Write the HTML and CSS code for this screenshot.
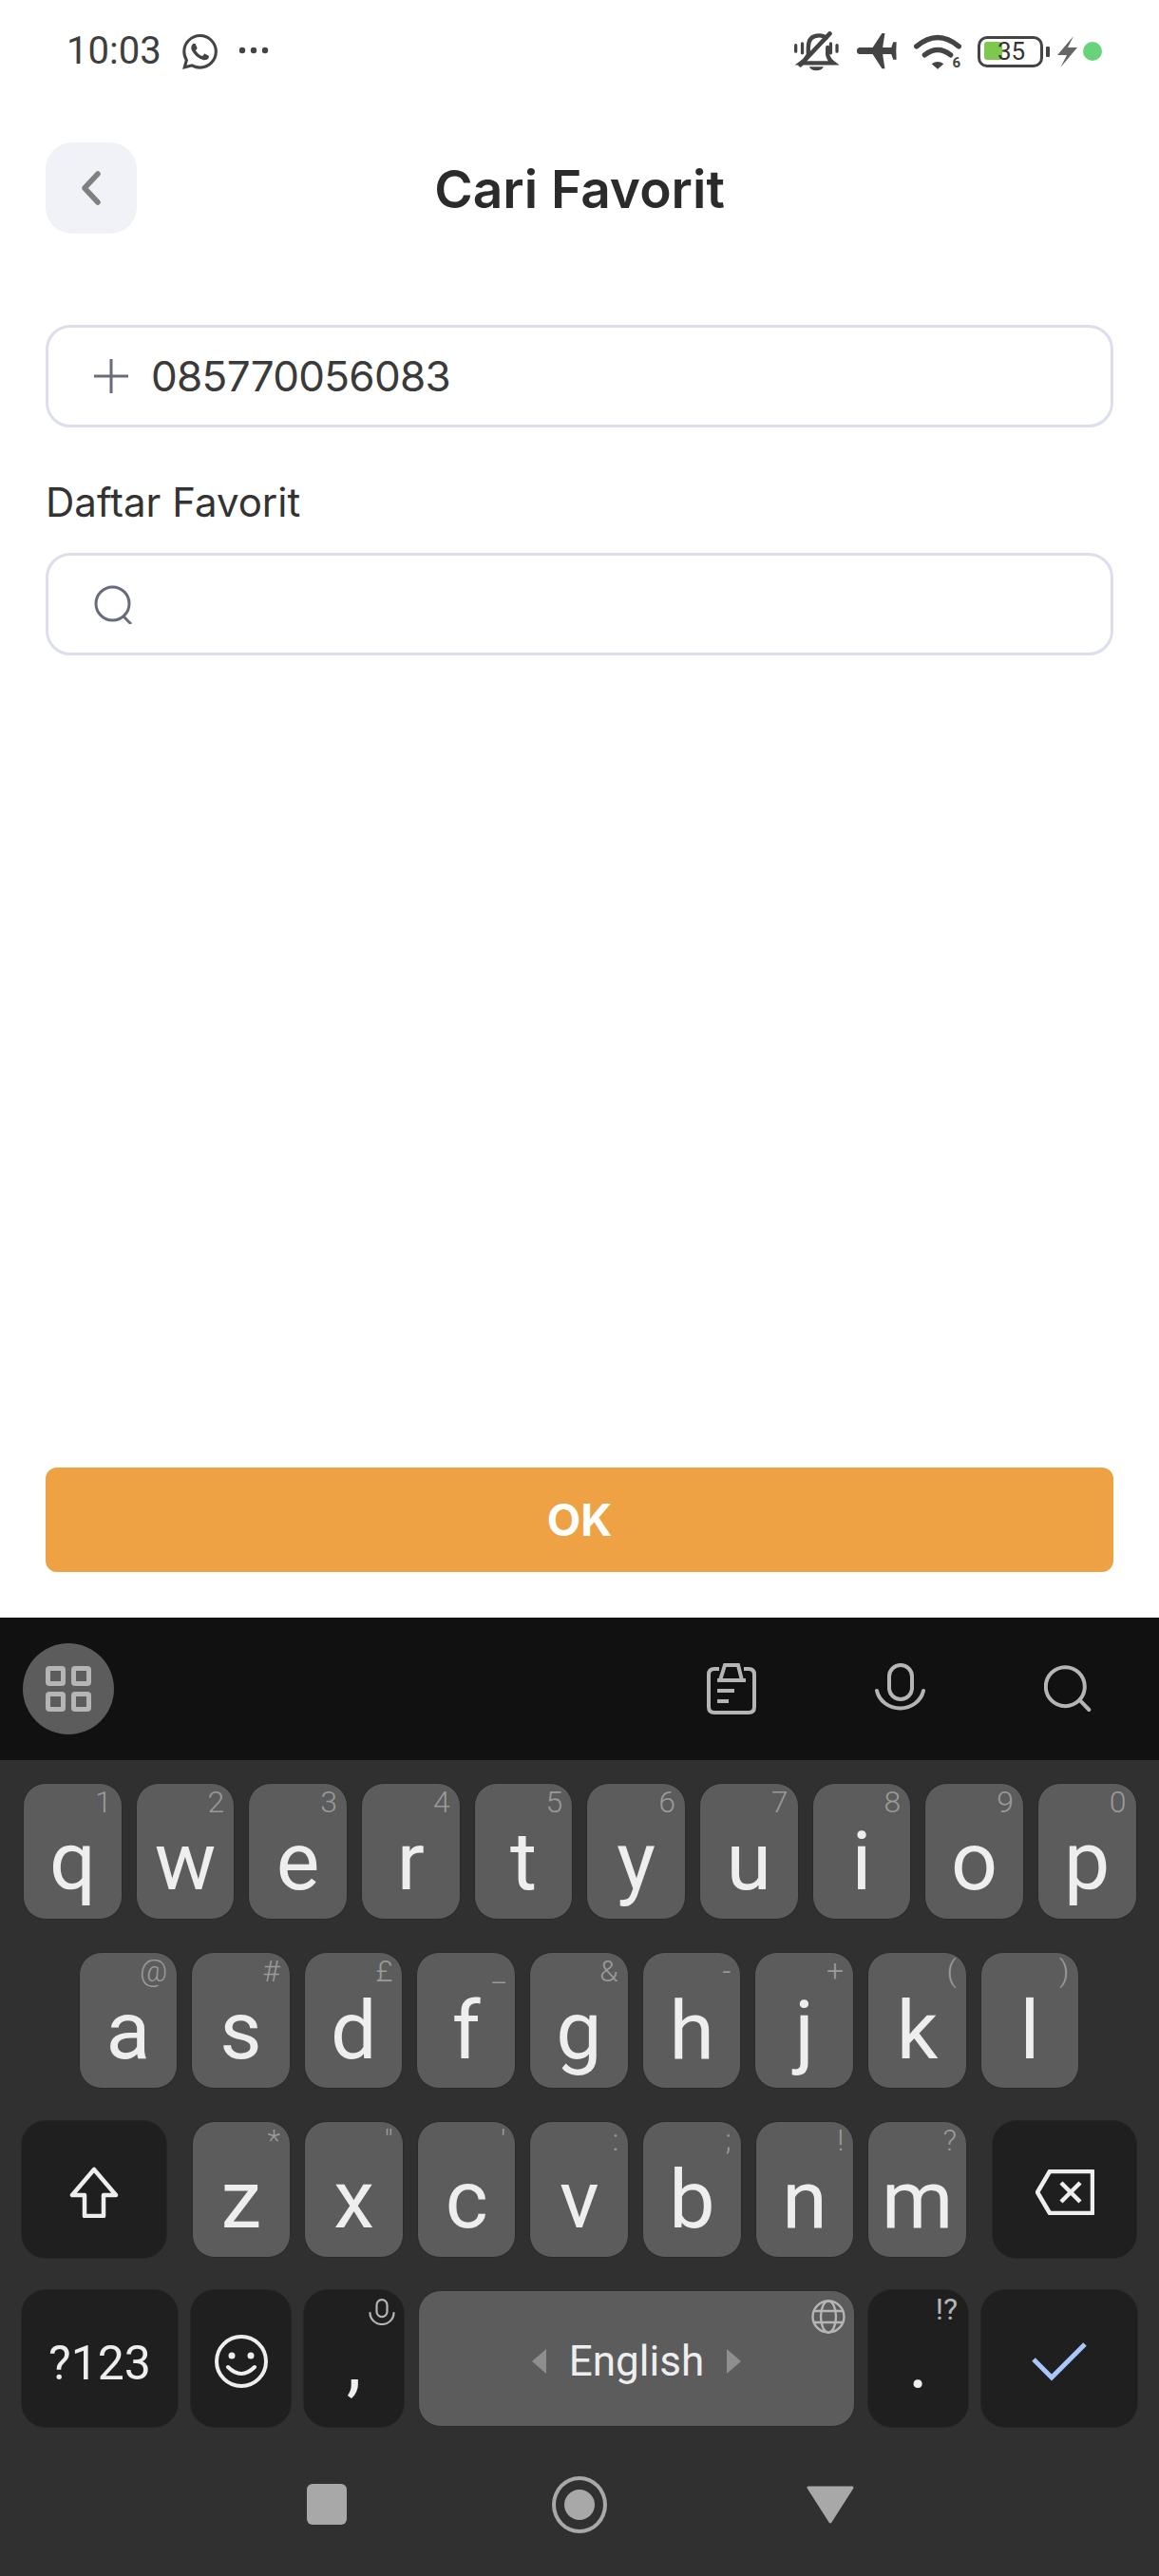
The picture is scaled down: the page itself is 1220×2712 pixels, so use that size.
FILE: index.html
```html
<!DOCTYPE html>
<html lang="id">
<head>
<meta charset="utf-8">
<title>Cari Favorit</title>
<link rel="stylesheet" href="styles.css">
</head>
<body>
<div class="phone">
  <main class="app">
    <div class="statusbar">
      <div class="status-left">
        <span class="time">10:03</span>
        <svg class="ic-wa" viewBox="0 0 24 24"><path fill="#444" d="M17.472 14.382c-.297-.149-1.758-.867-2.03-.967-.273-.099-.471-.148-.67.15-.197.297-.767.966-.94 1.164-.173.199-.347.223-.644.075-.297-.15-1.255-.463-2.39-1.475-.883-.788-1.48-1.761-1.653-2.059-.173-.297-.018-.458.13-.606.134-.133.298-.347.446-.52.149-.174.198-.298.298-.497.099-.198.05-.371-.025-.52-.075-.149-.669-1.612-.916-2.207-.242-.579-.487-.5-.669-.51-.173-.008-.371-.01-.57-.01-.198 0-.52.074-.792.372-.272.297-1.04 1.016-1.04 2.479 0 1.462 1.065 2.875 1.213 3.074.149.198 2.096 3.2 5.077 4.487.709.306 1.262.489 1.694.625.712.227 1.36.195 1.871.118.571-.085 1.758-.719 2.006-1.413.248-.694.248-1.289.173-1.413-.074-.124-.272-.198-.57-.347m-5.421 7.403h-.004a9.87 9.87 0 01-5.031-1.378l-.361-.214-3.741.982.998-3.648-.235-.374a9.86 9.86 0 01-1.51-5.26c.001-5.45 4.436-9.884 9.888-9.884 2.64 0 5.122 1.03 6.988 2.898a9.825 9.825 0 012.893 6.994c-.003 5.45-4.437 9.884-9.885 9.884m8.413-18.297A11.815 11.815 0 0012.05 0C5.495 0 .16 5.335.157 11.892c0 2.096.547 4.142 1.588 5.945L.057 24l6.305-1.654a11.882 11.882 0 005.683 1.448h.005c6.554 0 11.89-5.335 11.893-11.893a11.821 11.821 0 00-3.48-8.413z"/></svg>
        <svg class="ic-dots" viewBox="0 0 32 8"><circle cx="4" cy="4" r="3.2" fill="#444"/><circle cx="16" cy="4" r="3.2" fill="#444"/><circle cx="28" cy="4" r="3.2" fill="#444"/></svg>
      </div>
      <div class="status-right">
        <svg class="ic-bell" viewBox="170 100 143 125"><g fill="none" stroke="#444" stroke-width="13" stroke-linecap="round"><path d="M175 143v20M307 143v20M196 138v30M287 138v30" stroke-width="10"/><path d="M215 170v-20q0-38 35-38q14 0 22 8M277 150v22q2 16 18 28H192q14-10 20-22"/><path d="M190 206L284 106" stroke-width="14"/></g><path fill="#444" d="M218 212h46q-6 12-23 12t-23-12z"/></svg>
        <svg class="ic-plane" viewBox="367 103 133 115"><path fill="#444" d="M380 147h42l29-44h9l-7 44h27l6-17h10l-1 28 1 27h-10l-6-17h-27l7 45h-9l-29-45h-42a11 11 0 0 1 0-21z"/></svg>
        <div class="wifi">
          <svg class="ic-wifi" viewBox="550 105 150 110"><g fill="none" stroke="#444" stroke-width="16" stroke-linecap="round"><path d="M558 143q67-56 134 0"/><path d="M584 170q41-32 82 0"/></g><path fill="#444" d="M606 198q19-13 38 0l-19 17z"/></svg>
          <span class="wifi-six">6</span>
        </div>
        <div class="battery">
          <div class="battery-body"><span class="battery-fill"></span><span class="battery-text">35</span></div>
          <span class="battery-nub"></span>
        </div>
        <div class="charge">
          <svg class="ic-bolt" viewBox="0 0 21 33"><path fill="#666" d="M17 0L0 20H10L3.300 33L21 12H11Z"/></svg>
          <span class="dot"></span>
        </div>
      </div>
    </div>

    <header class="header">
      <button class="back" type="button" aria-label="Kembali">
        <svg class="ic-chev" viewBox="0 0 22 36"><path d="M18 3L4 18l14 15" fill="none" stroke="#808080" stroke-width="5.5" stroke-linecap="round" stroke-linejoin="round"/></svg>
      </button>
      <h1 class="title">Cari Favorit</h1>
      <span></span>
    </header>

    <section class="form">
      <div class="field">
        <svg class="ic-field" viewBox="0 0 36 36"><path d="M18 0v36M0 18h36" stroke="#686b7a" stroke-width="3" fill="none"/></svg>
        <span class="field-text">085770056083</span>
      </div>
      <div class="label">Daftar Favorit</div>
      <div class="field">
        <svg class="ic-field-search" viewBox="0 0 40 41"><circle cx="19.5" cy="19.5" r="17.5" fill="none" stroke="#686b7a" stroke-width="3"/><path d="M31 33l8 8" stroke="#686b7a" stroke-width="3" fill="none"/></svg>
      </div>
    </section>

    <button class="ok" type="button">OK</button>
  </main>

  <section class="keyboard">
    <div class="toolbar">
      <div class="tool-grid">
        <svg class="ic-grid" viewBox="0 0 48 48"><g fill="none" stroke="#b5b5b5" stroke-width="5"><rect x="2.500" y="2.500" width="16" height="16" rx="1.500"/><rect x="29.500" y="2.500" width="16" height="16" rx="1.500"/><rect x="2.500" y="29.500" width="16" height="16" rx="1.500"/><rect x="29.500" y="29.500" width="16" height="16" rx="1.500"/></g></svg>
      </div>
      <div class="tool-right">
        <svg class="ic-clip" viewBox="0 0 52 54"><g fill="none" stroke="#b5b5b5" stroke-width="4"><path d="M13 6H8Q2 6 2 12V46Q2 52 8 52H44Q50 52 50 46V12Q50 6 44 6H39"/><path d="M14 18L19 2H33L37 18M11 18H41M11 29H29M11 40H23"/></g></svg>
        <svg class="ic-mic" viewBox="0 0 53 54"><g fill="none" stroke="#b5b5b5" stroke-width="4" stroke-linecap="round"><rect x="15" y="2" width="24" height="36" rx="12"/><path d="M2 29A25 23 0 0 0 51 29"/></g></svg>
        <svg class="ic-search" viewBox="0 0 50 50"><g fill="none" stroke="#b5b5b5" stroke-width="4" stroke-linecap="round"><circle cx="22.300" cy="22.700" r="20.500"/><path d="M38.300 37.700L47.300 47"/></g></svg>
      </div>
    </div>

    <div class="keys">
      <div class="row row-one">
        <div class="key"><span class="hint">1</span>q</div>
        <div class="key"><span class="hint">2</span>w</div>
        <div class="key"><span class="hint">3</span>e</div>
        <div class="key"><span class="hint">4</span>r</div>
        <div class="key"><span class="hint">5</span>t</div>
        <div class="key"><span class="hint">6</span>y</div>
        <div class="key"><span class="hint">7</span>u</div>
        <div class="key"><span class="hint">8</span>i</div>
        <div class="key"><span class="hint">9</span>o</div>
        <div class="key"><span class="hint">0</span>p</div>
      </div>
      <div class="row row-two">
        <div class="key"><span class="hint">@</span>a</div>
        <div class="key"><span class="hint">#</span>s</div>
        <div class="key"><span class="hint">£</span>d</div>
        <div class="key"><span class="hint">_</span>f</div>
        <div class="key"><span class="hint">&amp;</span>g</div>
        <div class="key"><span class="hint">-</span>h</div>
        <div class="key"><span class="hint">+</span>j</div>
        <div class="key"><span class="hint">(</span>k</div>
        <div class="key"><span class="hint">)</span>l</div>
      </div>
      <div class="row row-three">
        <div class="fn fn-shift">
          <svg class="ic-shift" viewBox="0 0 52 54"><path d="M26 3L3 30H16V52H36V30H49Z" fill="none" stroke="#eee" stroke-width="4.500" stroke-linejoin="round"/></svg>
        </div>
        <div class="key"><span class="hint">*</span>z</div>
        <div class="key"><span class="hint">"</span>x</div>
        <div class="key"><span class="hint">'</span>c</div>
        <div class="key"><span class="hint">:</span>v</div>
        <div class="key"><span class="hint">;</span>b</div>
        <div class="key"><span class="hint">!</span>n</div>
        <div class="key"><span class="hint">?</span>m</div>
        <div class="fn fn-back">
          <svg class="ic-back" viewBox="0 0 62 48"><g fill="none" stroke="#eee" stroke-width="4.500" stroke-linejoin="round"><path d="M15 2H60V46H15L2 24Z"/><path d="M27 14L47 34M47 14L27 34"/></g></svg>
        </div>
      </div>
      <div class="row row-four">
        <div class="fn fn-sym">?123</div>
        <div class="fn fn-emoji">
          <svg class="ic-emoji" viewBox="0 0 56 56"><g fill="none" stroke="#eee" stroke-width="4"><circle cx="28" cy="28" r="26"/><path d="M14 34Q28 48 42 34" stroke-linecap="round"/></g><circle cx="18" cy="22" r="3.500" fill="#eee"/><circle cx="38" cy="22" r="3.500" fill="#eee"/></svg>
        </div>
        <div class="fn fn-punct">
          <svg class="ic-minimic" viewBox="0 0 28 28"><g fill="none" stroke="#b5b5b5" stroke-width="2.200" stroke-linecap="round"><rect x="8.500" y="1.200" width="11" height="18" rx="5.500"/><path d="M1.500 15A12.500 12 0 0 0 26.500 15"/></g></svg>
          ,
        </div>
        <div class="space">
          <svg class="ic-globe" viewBox="0 0 36 36"><g fill="none" stroke="#b5b5b5" stroke-width="2.400"><circle cx="18" cy="18" r="16.500"/><ellipse cx="18" cy="18" rx="8" ry="16.500"/><path d="M3 12H33M3 24H33"/></g></svg>
          <svg class="ic-arrow" viewBox="0 0 15 26"><path d="M15 0V26L0 13Z" fill="#8e8e8e"/></svg>
          <span>English</span>
          <svg class="ic-arrow" viewBox="0 0 15 26"><path d="M0 0V26L15 13Z" fill="#8e8e8e"/></svg>
        </div>
        <div class="fn fn-punct"><span class="hint hint-fn">!?</span>.</div>
        <div class="fn fn-enter">
          <svg class="ic-check" viewBox="0 0 58 42"><path d="M2 19L21 38L56 3" fill="none" stroke="#a8c7fa" stroke-width="5"/></svg>
        </div>
      </div>
    </div>

    <nav class="nav">
      <span class="nav-square"></span>
      <span class="nav-circle"><span class="nav-inner"></span></span>
      <svg class="ic-tri" viewBox="0 0 50 40"><path d="M2 2H48L25 38Z" fill="#a8a8a8" stroke="#a8a8a8" stroke-width="3" stroke-linejoin="round"/></svg>
    </nav>
  </section>
</div>
</body>
</html>
```
FILE: styles.css
```css
* { box-sizing: border-box; }
html, body { margin: 0; padding: 0; }
body { background: #fff; font-family: Roboto, "Liberation Sans", sans-serif; }

.phone { width: 1220px; height: 2712px; display: flex; flex-direction: column; overflow: hidden; }

.app { height: 1703px; padding: 0 48px 48px; display: flex; flex-direction: column; background: #fff; }

.statusbar { height: 106px; margin: 0 -48px; padding: 2px 60px 0 70px; display: flex; justify-content: space-between; align-items: center; }
.status-left, .status-right, .charge, .battery { display: flex; align-items: center; }
.status-left { gap: 22px; }
.time { font-size: 40px; color: #3e3e3e; line-height: 1; }
.ic-wa { width: 37px; height: 37px; display: block; }
.ic-dots { width: 32px; height: 8px; display: block; margin-bottom: 2px; }
.status-right { gap: 17px; }
.ic-bell { width: 47px; height: 42px; display: block; }
.ic-plane { width: 45px; height: 39px; display: block; }
.wifi { position: relative; width: 50px; height: 37px; }
.ic-wifi { width: 50px; height: 37px; display: block; }
.wifi-six { position: absolute; right: 1px; bottom: 0; font-size: 15px; font-weight: 700; line-height: 13px; color: #444; }
.battery { gap: 3px; }
.battery-body { position: relative; width: 69px; height: 33px; border: 3.500px solid #444; border-radius: 10px; display: flex; align-items: center; justify-content: center; }
.battery-fill { position: absolute; left: 4px; top: 3.500px; width: 19px; height: 19px; background: #7ec850; border-radius: 3px; }
.battery-text { position: relative; font-size: 26px; color: #333; margin-left: 2px; line-height: 1; }
.battery-nub { width: 4px; height: 11px; background: #444; border-radius: 1px; }
.charge { gap: 6px; margin-left: -9px; }
.ic-bolt { width: 21px; height: 33px; display: block; }
.dot { width: 20px; height: 20px; border-radius: 50%; background: #68d37a; }

.header { margin-top: 44px; height: 96px; display: grid; grid-template-columns: 96px 1fr 96px; align-items: center; }
.back { width: 96px; height: 96px; border: 0; padding: 0; background: #f1f2f8; border-radius: 28px; display: flex; align-items: center; justify-content: center; }
.ic-chev { width: 22px; height: 36px; display: block; }
.title { margin: 0; padding-top: 2px; text-align: center; font-family: Inter, sans-serif; font-size: 55px; font-weight: 600; color: #2b2b2b; line-height: 60px; }

.form { margin-top: 96px; display: flex; flex-direction: column; }
.field { height: 108px; border: 3px solid #dcdfeb; border-radius: 26px; padding-left: 48px; display: flex; align-items: center; gap: 24px; }
.ic-field { width: 36px; height: 36px; display: block; }
.ic-field-search { width: 40px; height: 41px; display: block; }
.field-text { font-family: Inter, sans-serif; font-size: 44px; letter-spacing: -0.7px; color: #3a3a3a; line-height: 1; }
.label { margin: 51px 0 25px; font-family: Inter, sans-serif; font-size: 42px; color: #333; line-height: 56px; }

.ok { margin-top: auto; height: 110px; border: 0; background: #eea243; color: #fff; border-radius: 12px; font-family: Inter, sans-serif; font-size: 46px; font-weight: 700; }

.keyboard { flex: 1; display: flex; flex-direction: column; background: #303030; }
.toolbar { height: 150px; background: #111; padding: 0 71px 0 24px; display: flex; align-items: center; justify-content: space-between; }
.tool-grid { width: 96px; height: 96px; border-radius: 50%; background: #5c5c5c; display: flex; align-items: center; justify-content: center; }
.ic-grid { width: 48px; height: 48px; display: block; }
.tool-right { display: flex; align-items: center; gap: 125px; }
.ic-clip { width: 52px; height: 54px; display: block; }
.ic-mic { width: 53px; height: 54px; display: block; }
.ic-search { width: 50px; height: 50px; display: block; }

.keys { padding-top: 24px; display: flex; flex-direction: column; gap: 34px; }
.row { height: 144px; display: flex; align-items: center; gap: 14px; }
.row-one { padding-left: 24px; }
.row-two { padding-left: 82.500px; }
.row-three { padding-left: 22px; }
.row-four { padding-left: 22px; gap: 12px; }

.key { position: relative; flex: none; width: 104.670px; height: 144px; padding-top: 21px; background: #5c5c5c; border: 1px solid #2a2a2a; border-radius: 24px; display: flex; justify-content: center; font-size: 86px; line-height: 122px; color: #eee; }
.hint { position: absolute; top: 0; right: 10px; font-size: 32px; font-weight: 300; line-height: normal; color: #9a9a9a; }

.fn { position: relative; flex: none; height: 146px; background: #1f1f1f; border: 1px solid #262626; border-radius: 26px; display: flex; align-items: center; justify-content: center; color: #eee; }
.fn-shift { width: 154px; margin-right: 11.500px; }
.fn-back { width: 153px; margin-left: 12px; }
.ic-shift { width: 52px; height: 54px; display: block; margin-top: 5px; }
.ic-back { width: 62px; height: 48px; display: block; margin-top: 6px; }
.fn-sym { width: 166px; padding-top: 10px; font-size: 50px; }
.fn-emoji { width: 107px; }
.ic-emoji { width: 56px; height: 56px; display: block; margin-top: 6px; }
.fn-punct { width: 107px; font-size: 80px; align-items: flex-start; padding-top: 29px; }
.fn-enter { width: 166px; }
.ic-check { width: 58px; height: 42px; display: block; margin-top: 6px; }
.ic-minimic { position: absolute; top: 9px; right: 9px; width: 28px; height: 28px; }
.hint-fn { right: 11px; top: 1px; font-size: 32px; font-weight: 400; color: #b5b5b5; }

.space { position: relative; flex: none; width: 460px; height: 144px; margin: 0 1px 0 2px; padding-top: 6px; background: #5c5c5c; border: 1px solid #2a2a2a; border-radius: 24px; display: flex; align-items: center; justify-content: center; gap: 24px; font-size: 44px; color: #eee; }
.ic-globe { position: absolute; top: 9px; right: 9px; width: 36px; height: 36px; }
.ic-arrow { width: 15px; height: 26px; display: block; }

.nav { flex: 1; padding: 6px 0 0 2px; display: flex; align-items: center; justify-content: center; gap: 210px; }
.nav-square { width: 42px; height: 43px; margin-right: 6px; background: #a8a8a8; border-radius: 6px; }
.nav-circle { width: 58px; height: 60px; border: 4px solid #a8a8a8; border-radius: 50%; display: flex; align-items: center; justify-content: center; }
.nav-inner { width: 32px; height: 32px; background: #a8a8a8; border-radius: 50%; }
.ic-tri { width: 50px; height: 40px; display: block; }
```
